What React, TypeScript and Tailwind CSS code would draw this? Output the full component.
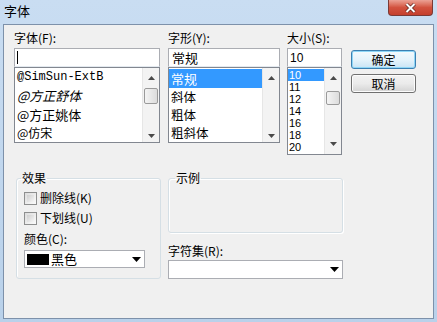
import React from "react";

function Arrow({ down }: { down?: boolean }) {
  return (
    <svg width="7" height="4" viewBox="0 0 7 4">
      {down ? <path d="M0 0H7L3.5 4Z" fill="#4a4a4a" /> : <path d="M0 4H7L3.5 0Z" fill="#4a4a4a" />}
    </svg>
  );
}

function ScrollBar({ thumb, downH }: { thumb?: string; downH: string }) {
  return (
    <div className="w-[17px] h-full flex flex-col bg-[#f3f3f3] border-l border-[#e6e6e6]">
      <div className="h-[20px] flex items-center justify-center">
        <Arrow />
      </div>
      {thumb ? (
        <div className={`${thumb} mx-[1px] rounded-[2px] border border-[#9a9a9a] bg-gradient-to-r from-[#f4f4f4] to-[#dcdcdc]`} />
      ) : null}
      <div className="flex-1" />
      <div className={`${downH} flex items-center justify-center`}>
        <Arrow down />
      </div>
    </div>
  );
}

function Combo({ children, w }: { children?: React.ReactNode; w: string }) {
  return (
    <div className={`${w} h-full bg-white border border-[#abadb3] flex items-center`}>
      <div className="flex-1 flex items-center h-full">{children}</div>
      <div className="w-[16px] flex items-center justify-center">
        <svg width="9" height="5" viewBox="0 0 9 5">
          <path d="M0 0H9L4.5 5Z" fill="#000" />
        </svg>
      </div>
    </div>
  );
}

function CheckBox({ label }: { label: string }) {
  return (
    <div className="h-[14px] flex items-center">
      <div className="w-[13px] h-[13px] border border-[#8e8f8f] bg-gradient-to-br from-[#dcdcdc] to-[#fbfbfb] p-[2px]">
        <div className="w-full h-full bg-gradient-to-br from-[#cfcfcf] to-[#f6f6f6]" />
      </div>
      <span className="ml-[3px] text-[12px] leading-[14px]">{label}</span>
    </div>
  );
}

const sizes = ["11", "12", "14", "16", "18", "20"];

export default function App() {
  return (
    <div className="w-[437px] h-[322px] bg-gradient-to-b from-[#c9ddf2] to-[#b9d1ea] flex flex-col overflow-hidden font-['Noto_Sans_CJK_SC','Noto_Sans',sans-serif] text-black">
      {/* title bar */}
      <div className="h-[24px] flex items-start shrink-0">
        <span className="pl-[4px] pt-[4px] text-[13px] leading-[14px]">字体</span>
        <div className="ml-auto mr-[4px] w-[45px] h-[16px] rounded-b-[4px] border border-t-0 border-[#7a3a36] bg-gradient-to-b from-[#eba195] via-[#d2523f] to-[#c43f2d] flex items-center justify-center">
          <svg width="11" height="10" viewBox="0 0 11 10">
            <path d="M1.5 1L9.5 9M9.5 1L1.5 9" stroke="#5a1d17" strokeWidth="3.4" />
            <path d="M1.5 1L9.5 9M9.5 1L1.5 9" stroke="#fff" strokeWidth="2" />
          </svg>
        </div>
      </div>

      {/* client */}
      <div className="mx-[3px] mb-[3px] flex-1 border border-[#7d91aa] bg-[#f0f0f0] flex flex-col">
        {/* top section */}
        <div className="flex pl-[10px] pt-[6px]">
          {/* font */}
          <div className="w-[146px] flex flex-col">
            <div className="h-[17px] text-[12px] leading-[14px]">字体(F):</div>
            <div className="h-[19px] bg-white border border-[#abadb3] border-b-[#e3e9ef] flex items-center pl-[2px]">
              <div className="w-[1px] h-[13px] bg-black" />
            </div>
            <div className="h-[76px] bg-white border border-[#828790] flex">
              <div className="flex-1 flex flex-col pl-[2px]">
                <div className="h-[19px] flex items-center font-['Liberation_Mono',monospace] text-[12px]">@SimSun-ExtB</div>
                <div className="h-[19px] flex items-center text-[13px] italic">@方正舒体</div>
                <div className="h-[19px] flex items-center text-[13px]">@方正姚体</div>
                <div className="h-[19px] flex items-center text-[12px]">@仿宋</div>
              </div>
              <ScrollBar thumb="h-[16px]" downH="h-[13px]" />
            </div>
          </div>

          {/* style */}
          <div className="ml-[8px] w-[112px] flex flex-col">
            <div className="h-[17px] text-[12px] leading-[14px]">字形(Y):</div>
            <div className="h-[19px] bg-white border border-[#abadb3] border-b-[#e3e9ef] flex items-center pl-[3px] text-[13px]">
              常规
            </div>
            <div className="h-[76px] bg-white border border-[#828790] flex">
              <div className="flex-1 flex flex-col pt-[1px] text-[12.5px]">
                <div className="h-[19px] shrink-0 flex items-center bg-[#3399ff] text-white pl-[2px] text-[13px]">常规</div>
                <div className="h-[18px] shrink-0 flex items-center pl-[2px]">斜体</div>
                <div className="h-[18px] shrink-0 flex items-center pl-[2px]">粗体</div>
                <div className="h-[18px] shrink-0 flex items-center pl-[2px]">粗斜体</div>
              </div>
              <ScrollBar downH="h-[13px]" />
            </div>
          </div>

          {/* size */}
          <div className="ml-[7px] w-[55px] flex flex-col">
            <div className="h-[17px] text-[12px] leading-[14px]">大小(S):</div>
            <div className="h-[19px] bg-white border border-[#abadb3] border-b-[#e3e9ef] flex items-center pl-[2px] text-[12px] font-['Liberation_Sans',sans-serif]">
              10
            </div>
            <div className="h-[88px] bg-white border border-[#828790] flex">
              <div className="flex-1 flex flex-col pt-[1px] text-[11px] font-['Liberation_Sans',sans-serif]">
                <div className="h-[12px] leading-[12px] bg-[#3399ff] text-white pl-[1px] overflow-hidden">10</div>
                {sizes.map((s) => (
                  <div key={s} className="h-[12px] leading-[12px] pl-[1px] overflow-hidden">
                    {s}
                  </div>
                ))}
              </div>
              <ScrollBar thumb="mt-[3px] h-[14px]" downH="h-[20px]" />
            </div>
          </div>

          {/* buttons */}
          <div className="ml-[9px] w-[65px] flex flex-col pt-[19px]">
            <div className="h-[19px] rounded-[3px] border border-[#3c7fb1] shadow-[inset_0_0_0_1px_#8fd6f6] bg-gradient-to-b from-[#f4fafd] via-[#e6f3fb] to-[#c9e4f5] flex items-center justify-center text-[12px]">
              确定
            </div>
            <div className="mt-[5px] h-[19px] rounded-[3px] border border-[#707070] shadow-[inset_0_0_0_1px_#fcfcfc] bg-gradient-to-b from-[#f2f2f2] via-[#ebebeb] to-[#d3d3d3] flex items-center justify-center text-[12px]">
              取消
            </div>
          </div>
        </div>

        {/* bottom section */}
        <div className="flex pl-[12px] mt-[16px]">
          <fieldset className="w-[145px] h-[108px] border border-[#d5dfe5] rounded-[3px] shadow-[inset_1px_1px_0_#fff]">
            <legend className="ml-[4px] px-[1px] text-[12px] leading-[14px]">效果</legend>
            <div className="pl-[7px] pt-[6px] flex flex-col">
              <CheckBox label="删除线(K)" />
              <div className="mt-[6px]">
                <CheckBox label="下划线(U)" />
              </div>
              <div className="mt-[7px] h-[14px] text-[12px] leading-[14px]">颜色(C):</div>
              <div className="mt-[4px] h-[18px]">
                <Combo w="w-[121px]">
                  <div className="ml-[2px] w-[22px] h-[11px] bg-black" />
                  <span className="ml-[2px] text-[13px] leading-[14px]">黑色</span>
                </Combo>
              </div>
            </div>
          </fieldset>

          <div className="ml-[7px] w-[175px] flex flex-col">
            <fieldset className="h-[62px] border border-[#d5dfe5] rounded-[3px] shadow-[inset_1px_1px_0_#fff,1px_1px_0_#fff]">
              <legend className="ml-[6px] px-[1px] text-[12px] leading-[14px]">示例</legend>
            </fieldset>
            <div className="mt-[11px] h-[14px] text-[12px] leading-[14px]">字符集(R):</div>
            <div className="mt-[2px] h-[19px]">
              <Combo w="w-[175px]" />
            </div>
          </div>
        </div>
      </div>
    </div>
  );
}
